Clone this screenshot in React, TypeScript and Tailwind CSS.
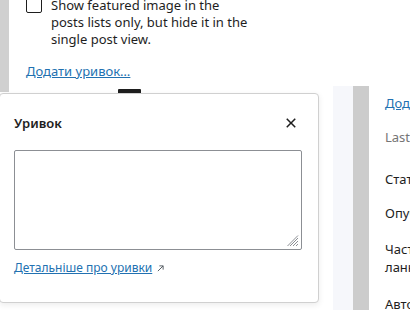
const font = { fontFamily: '"Noto Sans", "Open Sans", sans-serif' }

function ExternalArrow() {
  return (
    <svg width="9" height="9" viewBox="0 0 24 24" className="inline-block ml-1 align-middle text-[#50575e]">
      <path d="M9 5h10v10M19 5L5 19" fill="none" stroke="currentColor" strokeWidth="2.5" />
    </svg>
  )
}

export default function App() {
  return (
    <div className="relative w-[410px] h-[310px] overflow-hidden bg-white text-[#1e1e1e]" style={font}>
      <div className="flex h-full">
        <div className="flex w-[333px] shrink-0 items-start">
          <div className="w-[9px] h-[92px] bg-[#d0d0d0]" />
          <div className="pl-[17px] -mt-[3px]">
            <div className="flex gap-[9px]">
              <span className="mt-0 w-[16px] h-[16px] border border-[#1e1e1e] rounded-[2px] shrink-0" />
              <p className="text-[13px] leading-[17px] w-[200px]">
                Show featured image in the posts lists only, but hide it in the single post view.
              </p>
            </div>
            <a className="block mt-[15px] text-[13px] leading-[17px] text-[#2271b1] underline">Додати уривок…</a>
          </div>
        </div>
        <div className="flex-1 min-w-0 flex flex-col overflow-hidden">
          <div className="h-[86px] shrink-0" />
          <div className="flex flex-1">
            <div className="w-[20px] shrink-0 bg-[#f6f7fb]" />
            <div className="w-[16px] shrink-0 bg-[#cccccc]" />
            <div className="pl-[16px] pt-[9px] text-[13px] leading-[17px] whitespace-nowrap">
              <div className="text-[#2271b1] underline">Додати</div>
              <div className="mt-[17px] text-[#757575]">Last</div>
              <div className="mt-[25px]">Статус</div>
              <div className="mt-[17px]">Опубліковано</div>
              <div className="mt-[19px]">Частина</div>
              <div className="mt-[1px]">ланки</div>
              <div className="mt-[20px]">Автор</div>
            </div>
          </div>
        </div>
      </div>

      <div className="absolute left-[118px] top-[89px] w-[23px] h-[4px] bg-[#1e1e1e] rounded-t-[1px]" />

      <div className="absolute -left-px top-[93px] w-[320px] h-[210px] bg-white border border-[#d0d0d0] rounded-[4px] shadow-[0_2px_6px_rgba(0,0,0,0.08)]">
        <div className="flex items-center justify-between pl-[14px] pr-[15px] pt-[17px]">
          <h2 className="text-[13px] font-semibold leading-[20px]">Уривок</h2>
          <svg width="24" height="24" viewBox="0 0 24 24">
            <path d="M12 13.06l3.71 3.71 1.06-1.06L13.06 12l3.71-3.71-1.06-1.06L12 10.94 8.29 7.23 7.23 8.29 10.94 12l-3.71 3.71 1.06 1.06z" fill="#1e1e1e" />
          </svg>
        </div>
        <div className="pl-[14px] pt-[15px]">
          <div className="relative w-[288px] h-[100px] border border-[#8c8f94] rounded-[2px]">
            <svg width="12" height="12" viewBox="0 0 12 12" className="absolute right-[2px] bottom-[2px]">
              <path d="M11 3L3 11M11 6L6 11M11 9L9 11M11 0.5L0.5 11" stroke="#8c8f94" strokeWidth="1" />
            </svg>
          </div>
          <a className="block mt-[10px] text-[12px] leading-[16px] text-[#2271b1]">
            <span className="underline">Детальніше про уривки</span>
            <ExternalArrow />
          </a>
        </div>
      </div>
    </div>
  )
}
